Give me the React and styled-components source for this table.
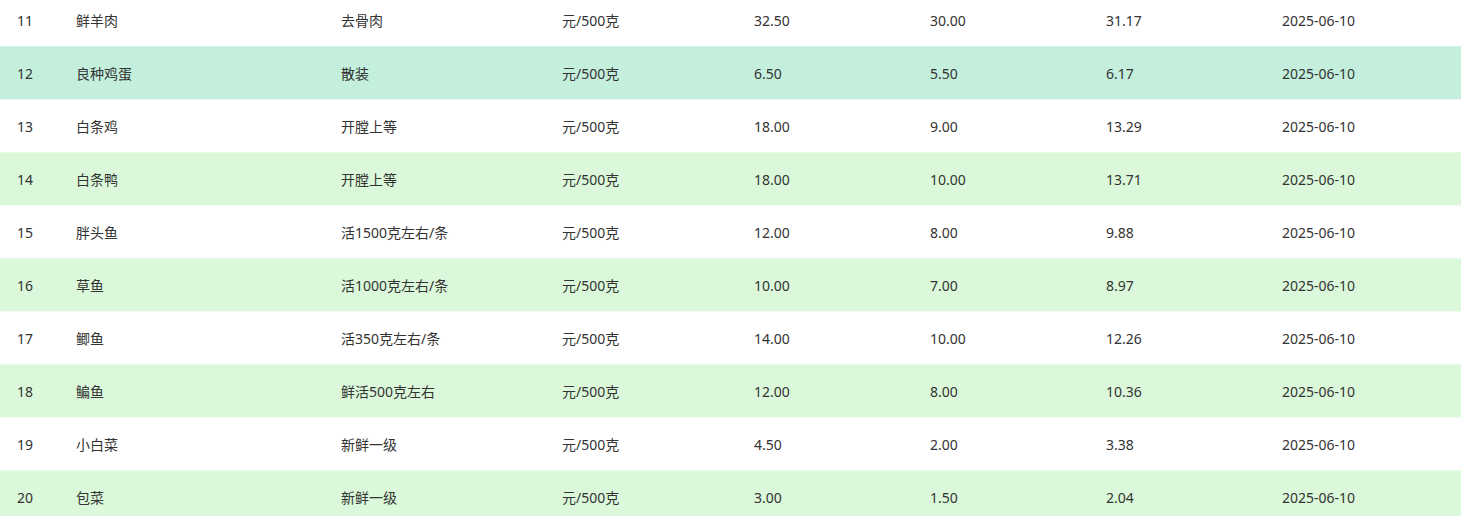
import React from 'react'
import styled, { createGlobalStyle } from 'styled-components'

const GlobalStyle = createGlobalStyle`
  html, body {
    margin: 0;
    padding: 0;
    background: #ffffff;
  }
  body {
    font-family: "Noto Sans", "Noto Sans CJK SC", "Liberation Sans", sans-serif;
    font-size: 14px;
    color: #333333;
  }
`

const columns = [59, 265, 221, 192, 176, 176, 176, 196]

const rows = [
  ['11', '鲜羊肉', '去骨肉', '元/500克', '32.50', '30.00', '31.17', '2025-06-10'],
  ['12', '良种鸡蛋', '散装', '元/500克', '6.50', '5.50', '6.17', '2025-06-10'],
  ['13', '白条鸡', '开膛上等', '元/500克', '18.00', '9.00', '13.29', '2025-06-10'],
  ['14', '白条鸭', '开膛上等', '元/500克', '18.00', '10.00', '13.71', '2025-06-10'],
  ['15', '胖头鱼', '活1500克左右/条', '元/500克', '12.00', '8.00', '9.88', '2025-06-10'],
  ['16', '草鱼', '活1000克左右/条', '元/500克', '10.00', '7.00', '8.97', '2025-06-10'],
  ['17', '鲫鱼', '活350克左右/条', '元/500克', '14.00', '10.00', '12.26', '2025-06-10'],
  ['18', '鳊鱼', '鲜活500克左右', '元/500克', '12.00', '8.00', '10.36', '2025-06-10'],
  ['19', '小白菜', '新鲜一级', '元/500克', '4.50', '2.00', '3.38', '2025-06-10'],
  ['20', '包菜', '新鲜一级', '元/500克', '3.00', '1.50', '2.04', '2025-06-10']
]

const tones = {
  plain: { bg: '#ffffff', line: '#f3f8f4' },
  stripe: { bg: '#dbf9da', line: '#e6fbe5' },
  hover: { bg: '#c4efdd', line: '#d3f4e7' }
}

const Viewport = styled.div`
  width: 1461px;
  height: 516px;
  overflow: hidden;
`

const Table = styled.table`
  width: 1461px;
  margin-top: -7px;
  border-collapse: collapse;
  table-layout: fixed;
`

const Row = styled.tr`
  height: 53px;
  background: ${props => tones[props.tone].bg};
  box-shadow: inset 0 1px 0 ${props => tones[props.tone].line};
`

const Cell = styled.td`
  padding: 2px 0 0 17px;
  height: 51px;
  line-height: 20px;
  vertical-align: middle;
  white-space: nowrap;
  color: #333333;
  font-size: 14px;
`

const toneFor = (index) => {
  if (index === 1) return 'hover'
  return index % 2 === 1 ? 'stripe' : 'plain'
}

export default function App() {
  return (
    <>
      <GlobalStyle />
      <Viewport>
        <Table>
          <colgroup>
            {columns.map((w, i) => (
              <col key={i} style={{ width: w }} />
            ))}
          </colgroup>
          <tbody>
            {rows.map((row, i) => (
              <Row key={row[0]} tone={toneFor(i)}>
                {row.map((value, j) => (
                  <Cell key={j}>{value}</Cell>
                ))}
              </Row>
            ))}
          </tbody>
        </Table>
      </Viewport>
    </>
  )
}
